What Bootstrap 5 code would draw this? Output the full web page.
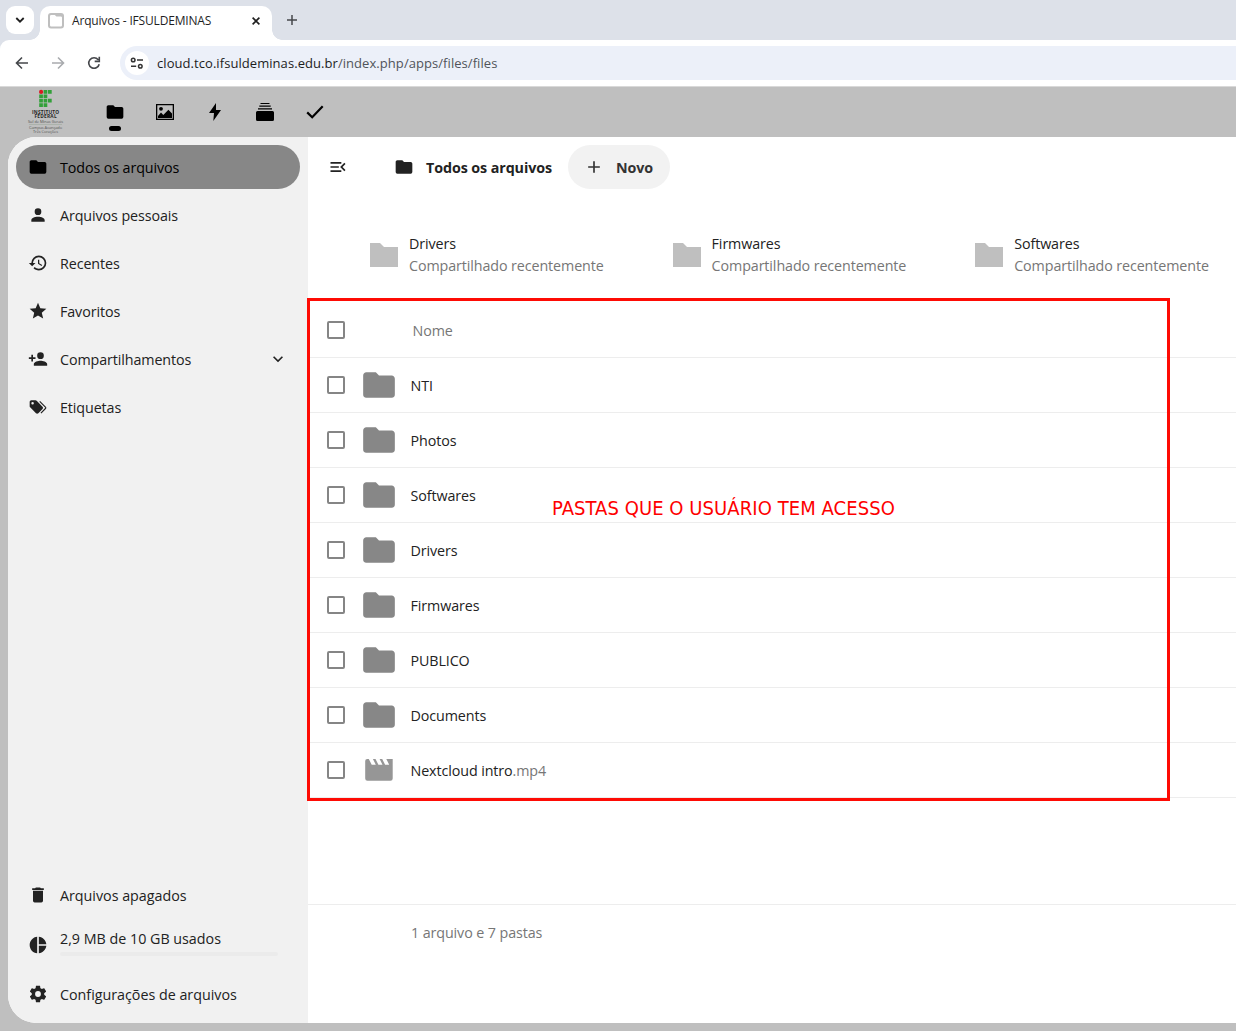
<!DOCTYPE html>
<html lang="pt-BR">
<head>
<meta charset="utf-8">
<meta name="viewport" content="width=device-width, initial-scale=1">
<title>Arquivos - IFSULDEMINAS</title>
<link href="https://cdn.jsdelivr.net/npm/bootstrap@5.3.0/dist/css/bootstrap.min.css" rel="stylesheet">
<style>
body{font-family:"Open Sans","Noto Sans",sans-serif;font-size:14.3px;letter-spacing:-.1px;line-height:22px;color:#222;height:1031px;overflow:hidden;background:#bfbfbf}
svg{display:block;flex:none;fill:currentColor}
.i20{width:20px;height:20px}
.tabstrip{height:40px;background:#dde1e9;padding:6px 0 0 6px}
.tabsearch{width:28px;height:28px;border-radius:9px;background:#fff}
.browser-tab{width:232px;height:34px;margin-left:6px;padding-left:8px;background:#fff;border-radius:10px 10px 0 0;position:relative;font-size:12px;letter-spacing:-.17px;color:#1f1f1f;padding-bottom:5px}
.browser-tab::before,.browser-tab::after{content:"";position:absolute;bottom:0;width:10px;height:10px}
.browser-tab::before{left:-10px;background:radial-gradient(circle at 0 0,transparent 9.5px,#fff 10px)}
.browser-tab::after{right:-10px;background:radial-gradient(circle at 100% 0,transparent 9.5px,#fff 10px)}
.tabclose{margin-right:12px}
.newtab{margin:9px 0 0 15px}
.toolwrap{background:#dde1e9}
.toolbar{height:47px;background:#fff;border-bottom:1px solid #d9d9d9;border-top-left-radius:9px;padding-left:14px}
.toolgap{margin-left:20px}
.urlbar{height:34px;background:#ecf0f9;border-radius:17px 0 0 17px;padding-left:5px;margin-left:18px;font-size:13px;letter-spacing:.06px;color:#1c1c1c}
.siteinfo{width:24px;height:24px;border-radius:50%;background:#fff}
.url-path{color:#50545a}
.apphead{height:50px;padding-left:20px;color:#000}
.brandbox{width:50px;height:50px}
.appitem{width:50px;height:50px}
.appitem.current::after{content:"";position:absolute;left:19px;top:39px;width:12px;height:5px;border-radius:3px;background:#000}
.shell{height:886px;margin-left:8px;border-radius:28px 0 0 28px;background:#fff;overflow:hidden}
.side{width:300px;background:#f1f1f1;padding:8px 8px 7px}
.side .navitem{height:44px;margin-bottom:4px;padding:0 12px;border-radius:22px;gap:12px;color:#222}
.side .navitem.current{background:#878787;color:#000}
.side .navitem>span,.filerow>span,.crumbs span{padding-top:2px}
.side .wide{letter-spacing:-.01px}
.quotatext{padding-bottom:2px}
.side .navitem.quotaitem{margin-bottom:7px;padding-top:4px}
.quota{height:4px;background:#ebebeb;border-radius:3px;width:218px;margin-bottom:6px}
.crumbs{height:60px;padding-left:20px}
.crumbicon{margin-left:46px}
.crumbname{margin-left:12px;width:126px;white-space:nowrap;letter-spacing:-.09px}
.novo{height:44px;width:102px;border-radius:22px;background:#f2f2f2;color:#333;padding-left:16px;gap:12px;margin-left:16px}
.recents{height:106px;padding:36px 0 26px 62px}
.recent{width:302.6px;flex:none;gap:11px}
.dim{color:#767676}
.filerow{height:55px;border-bottom:1px solid #ededed;padding-left:19px}
.filerow .form-check-input{width:18px;height:18px;border:2px solid #858585;border-radius:2px;margin:0;flex:none}
.headname{margin-left:67.5px}
.ficon{width:38px;height:38px;margin-left:15px;margin-right:12.5px;color:#878787;flex:none}
.summary{margin-top:106px;border-top:1px solid #ededed;height:56px;padding-left:103px}
.callout{position:absolute;left:307px;top:298px;width:863px;height:503px;border:3px solid #fe0b04;pointer-events:none}
.callout span{position:absolute;left:242px;top:195px;white-space:nowrap;font-family:"DejaVu Sans Condensed","DejaVu Sans",sans-serif;font-stretch:condensed;font-size:20px;line-height:24px;letter-spacing:.07px;color:#fe0000}
</style>
<script src="https://cdn.jsdelivr.net/npm/bootstrap@5.3.0/dist/js/bootstrap.bundle.min.js"></script>
</head>
<body>
<svg width="0" height="0" class="position-absolute">
<symbol id="folder" viewBox="0 0 24 24"><path d="M10,4H4C2.89,4 2,4.89 2,6V18A2,2 0 0,0 4,20H20A2,2 0 0,0 22,18V8C22,6.89 21.1,6 20,6H12L10,4Z"/></symbol>
<symbol id="plus" viewBox="0 0 24 24"><path d="M19,13H13V19H11V13H5V11H11V5H13V11H19V13Z"/></symbol>
<symbol id="shared" viewBox="0 0 28 24"><path d="M0 0H10L14 4H28V24H0Z"/></symbol>
</svg>

<div class="tabstrip d-flex">
  <div class="tabsearch d-flex align-items-center justify-content-center"><svg width="10" height="8" viewBox="0 0 10 8"><path d="M1.3 2L5 5.7L8.7 2" fill="none" stroke="#1f1f1f" stroke-width="1.8"/></svg></div>
  <div class="browser-tab d-flex align-items-center">
    <svg width="16" height="16" viewBox="0 0 16 16"><rect width="16" height="15.5" rx="3" fill="#bfbfbf"/><path d="M3.2 2H6.8L8.4 3.4H12.8Q14 3.4 14 4.6V12.3Q14 13.5 12.8 13.5H3.2Q2 13.5 2 12.3V3.2Q2 2 3.2 2Z" fill="#fff"/></svg>
    <span class="ms-2 flex-fill">Arquivos - IFSULDEMINAS</span>
    <svg width="8" height="8" viewBox="0 0 8 8" class="tabclose"><path d="M.6 .6L7.4 7.4M7.4 .6L.6 7.4" stroke="#1f1f1f" stroke-width="1.6"/></svg>
  </div>
  <svg class="newtab" width="10" height="10" viewBox="0 0 10 10"><path d="M5 0V10M0 5H10" stroke="#45474b" stroke-width="1.5"/></svg>
</div>
<div class="toolwrap"><div class="toolbar d-flex align-items-center">
  <svg width="16" height="16" viewBox="0 0 16 16"><path d="M14 8H3M8 2.5L2.5 8L8 13.5" fill="none" stroke="#45474b" stroke-width="1.6"/></svg>
  <svg class="toolgap" width="16" height="16" viewBox="0 0 16 16"><path d="M2 8H13M8 2.5L13.5 8L8 13.5" fill="none" stroke="#a9abae" stroke-width="1.6"/></svg>
  <svg class="toolgap" width="16" height="16" viewBox="0 0 16 16"><path d="M13.2 9.2A5.3 5.3 0 1 1 12.2 4.7M13.3 1.8V6.4H8.7" fill="none" stroke="#45474b" stroke-width="1.6"/></svg>
  <div class="urlbar d-flex align-items-center flex-fill">
    <div class="siteinfo d-flex align-items-center justify-content-center"><svg width="14" height="12" viewBox="0 0 14 12"><path d="M7 3H13M1 9.3H6.2" stroke="#333" stroke-width="1.6"/><circle cx="3.2" cy="3" r="1.8" fill="none" stroke="#333" stroke-width="1.5"/><circle cx="10.3" cy="9.2" r="1.8" fill="none" stroke="#333" stroke-width="1.5"/></svg></div>
    <span class="ms-2">cloud.tco.ifsuldeminas.edu.br<span class="url-path">/index.php/apps/files/files</span></span>
  </div>
</div></div>

<header class="apphead d-flex">
  <svg class="brandbox" viewBox="0 0 50 50"><g fill="#33a03a"><path d="M23.6 3h3.7v3.7h-3.7zM28 3h3.7v3.7H28zM19.2 7.4h3.7v3.7h-3.7zM23.6 7.4h3.7v3.7h-3.7zM19.2 11.8h3.7v3.7h-3.7zM23.6 11.8h3.7v3.7h-3.7zM28 11.8h3.7v3.7H28zM19.2 16.2h3.7v3.7h-3.7zM23.6 16.2h3.7v3.7h-3.7z"/></g><circle cx="21.1" cy="4.9" r="2.1" fill="#d91a21"/>
    <g font-family="Open Sans,sans-serif" text-anchor="middle" fill="#252525"><text x="25.5" y="26.5" font-size="4.8" font-weight="700" textLength="27">INSTITUTO</text><text x="25.5" y="30.6" font-size="4.8" font-weight="700" textLength="22">FEDERAL</text><g fill="#555"><text x="25.5" y="35.5" font-size="3.9" textLength="35">Sul de Minas Gerais</text><text x="25.5" y="42" font-size="4" textLength="33">Campus Avançado</text><text x="25.5" y="46" font-size="3.9" textLength="25">Três Corações</text></g></g><path d="M9 37.5H42" stroke="#9daa9d" stroke-width=".6"/></svg>
  <div class="ms-3 ps-1 d-flex">
  <div class="appitem current position-relative d-flex align-items-center justify-content-center"><svg class="i20"><use href="#folder"/></svg></div>
  <div class="appitem d-flex align-items-center justify-content-center"><svg width="18" height="16" viewBox="0 0 18 16"><path fill-rule="evenodd" d="M0 0H18V16H0ZM1.3 1.3V14.7H16.7V1.3Z"/><circle cx="5" cy="4.8" r="1.9"/><path d="M2 14V12L5 8.6L7.3 11L12.4 5.8L16 9.5V14Z"/></svg></div>
  <div class="appitem d-flex align-items-center justify-content-center"><svg width="14" height="18" viewBox="0 0 14 18"><path d="M8 0L1 10H6L5.3 18L13 7H8Z"/></svg></div>
  <div class="appitem d-flex align-items-center justify-content-center"><svg width="18" height="18" viewBox="0 0 18 18"><path d="M4.5 0H13.5V1H4.5ZM3.3 2.6H14.7V3.7H3.3ZM2 5.2H16V6.5H2ZM1.5 8H16.5Q18 8 18 9.5V16.5Q18 18 16.5 18H1.5Q0 18 0 16.5V9.5Q0 8 1.5 8Z"/></svg></div>
  <div class="appitem d-flex align-items-center justify-content-center"><svg width="18" height="14" viewBox="0 0 18 14"><path d="M1.2 7.4L6.2 12.2L16.7 1.3" fill="none" stroke="#000" stroke-width="2.2"/></svg></div>
  </div>
</header>

<div class="shell d-flex">
  <nav class="side flex-shrink-0 d-flex flex-column">
    <div class="navitem current d-flex align-items-center"><svg class="i20"><use href="#folder"/></svg><span>Todos os arquivos</span></div>
    <div class="navitem d-flex align-items-center"><svg class="i20" viewBox="0 0 24 24"><path d="M12,4A4,4 0 0,1 16,8A4,4 0 0,1 12,12A4,4 0 0,1 8,8A4,4 0 0,1 12,4M12,14C16.42,14 20,15.79 20,18V20H4V18C4,15.79 7.58,14 12,14Z"/></svg><span>Arquivos pessoais</span></div>
    <div class="navitem d-flex align-items-center"><svg class="i20" viewBox="0 0 24 24"><path d="M13.5,8H12V13L16.28,15.54L17,14.33L13.5,12.25V8M13,3A9,9 0 0,0 4,12H1L4.96,16.03L9,12H6A7,7 0 0,1 13,5A7,7 0 0,1 20,12A7,7 0 0,1 13,19C11.07,19 9.32,18.21 8.06,16.94L6.64,18.36C8.27,20 10.5,21 13,21A9,9 0 0,0 22,12A9,9 0 0,0 13,3"/></svg><span>Recentes</span></div>
    <div class="navitem d-flex align-items-center"><svg class="i20" viewBox="0 0 24 24"><path d="M12,17.27L18.18,21L16.54,13.97L22,9.24L14.81,8.62L12,2L9.19,8.62L2,9.24L7.45,13.97L5.82,21L12,17.27Z"/></svg><span>Favoritos</span></div>
    <div class="navitem d-flex align-items-center"><svg class="i20" viewBox="0 0 24 24"><path d="M15,14C12.33,14 7,15.33 7,18V20H23V18C23,15.33 17.67,14 15,14M6,10V7H4V10H1V12H4V15H6V12H9V10M15,12A4,4 0 0,0 19,8A4,4 0 0,0 15,4A4,4 0 0,0 11,8A4,4 0 0,0 15,12Z"/></svg><span class="flex-fill">Compartilhamentos</span><svg class="i20" viewBox="0 0 24 24"><path d="M7.41,8.58L12,13.17L16.59,8.58L18,10L12,16L6,10L7.41,8.58Z"/></svg></div>
    <div class="navitem d-flex align-items-center"><svg class="i20" viewBox="0 0 24 24"><path d="M5.5,9A1.5,1.5 0 0,0 7,7.5A1.5,1.5 0 0,0 5.5,6A1.5,1.5 0 0,0 4,7.5A1.5,1.5 0 0,0 5.5,9M17.41,11.58C17.77,11.94 18,12.44 18,13C18,13.55 17.78,14.05 17.41,14.41L12.41,19.41C12.05,19.77 11.55,20 11,20C10.45,20 9.95,19.78 9.58,19.41L2.59,12.42C2.22,12.05 2,11.55 2,11V6C2,4.89 2.89,4 4,4H9C9.55,4 10.05,4.22 10.41,4.58L17.41,11.58M13.54,5.71L14.54,4.71L21.41,11.58C21.78,11.94 22,12.45 22,13C22,13.55 21.78,14.05 21.42,14.41L16.04,19.79L15.04,18.79L20.75,13L13.54,5.71Z"/></svg><span>Etiquetas</span></div>
    <div class="navitem wide d-flex align-items-center mt-auto"><svg class="i20" viewBox="0 0 24 24"><path d="M19,4H15.5L14.5,3H9.5L8.5,4H5V6H19M6,19A2,2 0 0,0 8,21H16A2,2 0 0,0 18,19V7H6V19Z"/></svg><span>Arquivos apagados</span></div>
    <div class="navitem wide quotaitem d-flex align-items-center"><svg class="i20" viewBox="0 0 24 24"><path d="M11,2V22C5.9,21.5 2,17.2 2,12C2,6.8 5.9,2.5 11,2M13,2V11H22C21.5,6.2 17.8,2.5 13,2M13,13V22C17.7,21.5 21.5,17.8 22,13H13Z"/></svg><div><div class="quotatext">2,9 MB de 10 GB usados</div><div class="quota"></div></div></div>
    <div class="navitem wide d-flex align-items-center mb-0"><svg class="i20" viewBox="0 0 24 24"><path d="M12,15.5A3.5,3.5 0 0,1 8.5,12A3.5,3.5 0 0,1 12,8.5A3.5,3.5 0 0,1 15.5,12A3.5,3.5 0 0,1 12,15.5M19.43,12.97C19.47,12.65 19.5,12.33 19.5,12C19.5,11.67 19.47,11.34 19.43,11L21.54,9.37C21.73,9.22 21.78,8.95 21.66,8.73L19.66,5.27C19.54,5.05 19.27,4.96 19.05,5.05L16.56,6.05C16.04,5.66 15.5,5.32 14.87,5.07L14.5,2.42C14.46,2.18 14.25,2 14,2H10C9.75,2 9.54,2.18 9.5,2.42L9.13,5.07C8.5,5.32 7.96,5.66 7.44,6.05L4.95,5.05C4.73,4.96 4.46,5.05 4.34,5.27L2.34,8.73C2.21,8.95 2.27,9.22 2.46,9.37L4.57,11C4.53,11.34 4.5,11.67 4.5,12C4.5,12.33 4.53,12.65 4.57,12.97L2.46,14.63C2.27,14.78 2.21,15.05 2.34,15.27L4.34,18.73C4.46,18.95 4.73,19.03 4.95,18.95L7.44,17.94C7.96,18.34 8.5,18.68 9.13,18.93L9.5,21.58C9.54,21.82 9.75,22 10,22H14C14.25,22 14.46,21.82 14.5,21.58L14.87,18.93C15.5,18.67 16.04,18.34 16.56,17.94L19.05,18.95C19.27,19.03 19.54,18.95 19.66,18.73L21.66,15.27C21.78,15.05 21.73,14.78 21.54,14.63L19.43,12.97Z"/></svg><span>Configurações de arquivos</span></div>
  </nav>
  <main class="flex-grow-1 overflow-hidden">
    <div class="crumbs d-flex align-items-center">
      <svg class="i20" viewBox="0 0 24 24"><path d="M21,15.61L19.59,17L14.58,12L19.59,7L21,8.39L17.44,12L21,15.61M3,6H16V8H3V6M3,13V11H13V13H3M3,18V16H16V18H3Z"/></svg>
      <svg class="i20 crumbicon"><use href="#folder"/></svg>
      <span class="crumbname fw-bold">Todos os arquivos</span>
      <div class="novo d-flex align-items-center fw-bold"><svg class="i20"><use href="#plus"/></svg><span>Novo</span></div>
    </div>
    <div class="recents d-flex">
      <div class="recent d-flex align-items-center"><svg width="28" height="24"><use href="#shared" fill="#bfbfbf"/></svg><div><div>Drivers</div><div class="dim">Compartilhado recentemente</div></div></div>
      <div class="recent d-flex align-items-center"><svg width="28" height="24"><use href="#shared" fill="#bfbfbf"/></svg><div><div>Firmwares</div><div class="dim">Compartilhado recentemente</div></div></div>
      <div class="recent d-flex align-items-center"><svg width="28" height="24"><use href="#shared" fill="#bfbfbf"/></svg><div><div>Softwares</div><div class="dim">Compartilhado recentemente</div></div></div>
    </div>
    <div class="filelist">
      <div class="filerow d-flex align-items-center"><input class="form-check-input" type="checkbox"><span class="headname dim">Nome</span></div>
      <div class="filerow d-flex align-items-center"><input class="form-check-input" type="checkbox"><svg class="ficon"><use href="#folder"/></svg><span>NTI</span></div>
      <div class="filerow d-flex align-items-center"><input class="form-check-input" type="checkbox"><svg class="ficon"><use href="#folder"/></svg><span>Photos</span></div>
      <div class="filerow d-flex align-items-center"><input class="form-check-input" type="checkbox"><svg class="ficon"><use href="#folder"/></svg><span>Softwares</span></div>
      <div class="filerow d-flex align-items-center"><input class="form-check-input" type="checkbox"><svg class="ficon"><use href="#folder"/></svg><span>Drivers</span></div>
      <div class="filerow d-flex align-items-center"><input class="form-check-input" type="checkbox"><svg class="ficon"><use href="#folder"/></svg><span>Firmwares</span></div>
      <div class="filerow d-flex align-items-center"><input class="form-check-input" type="checkbox"><svg class="ficon"><use href="#folder"/></svg><span>PUBLICO</span></div>
      <div class="filerow d-flex align-items-center"><input class="form-check-input" type="checkbox"><svg class="ficon"><use href="#folder"/></svg><span>Documents</span></div>
      <div class="filerow d-flex align-items-center"><input class="form-check-input" type="checkbox"><svg class="ficon" viewBox="0 0 38 38"><path fill="#969696" d="M7.2 8H8.8L11.7 13.7H15.8L12.9 8H15.5L18.4 13.7H22.5L19.6 8H22.2L25.1 13.7H29.2L26.3 8H32.7V27.5Q32.7 29.8 30.4 29.8H7.5Q5.2 29.8 5.2 27.5V10Q5.2 8 7.2 8Z"/></svg><span>Nextcloud intro<span class="dim">.mp4</span></span></div>
    </div>
    <div class="summary d-flex align-items-center dim"><span>1 arquivo e 7 pastas</span></div>
  </main>
</div>
<div class="callout"><span>PASTAS QUE O USUÁRIO TEM ACESSO</span></div>
</body>
</html>
